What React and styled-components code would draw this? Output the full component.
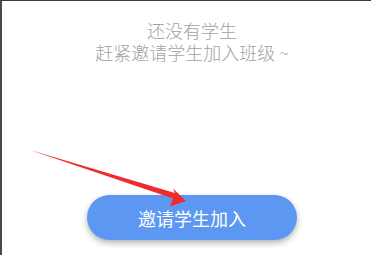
import React from "react";
import styled, { createGlobalStyle } from "styled-components";

const GlobalStyle = createGlobalStyle`
  html, body {
    margin: 0;
    padding: 0;
    background: #fff;
  }
  body {
    font-family: "Microsoft YaHei", "Noto Sans CJK SC", "Noto Sans", sans-serif;
  }
`;

const Frame = styled.div`
  position: relative;
  box-sizing: border-box;
  width: 371px;
  height: 255px;
  overflow: hidden;
  border-top: 1px solid #3a3a3a;
  border-left: 2px solid #4a4a4a;
  background: #fff;
  display: flex;
  flex-direction: column;
  align-items: center;
  padding: 18px 0 15px 11px;
`;

const Empty = styled.div`
  display: flex;
  flex-direction: column;
  align-items: center;
  color: #a2a2a2;
  font-size: 18px;
  line-height: 22px;
`;

const Line = styled.p`
  margin: 0;
  white-space: nowrap;
  font-weight: 300;
`;

const InviteButton = styled.button`
  margin-top: auto;
  width: 210px;
  height: 45px;
  border: none;
  border-radius: 23px;
  background: #5c97f2;
  color: #fff;
  font-family: inherit;
  font-size: 18px;
  box-shadow: 0 3px 6px rgba(0, 0, 0, 0.3);
  cursor: pointer;
`;

const Arrow = styled.svg`
  position: absolute;
  left: 0;
  top: 0;
  pointer-events: none;
`;

export default function App() {
  return (
    <>
      <GlobalStyle />
      <Frame>
        <Empty>
          <Line>还没有学生</Line>
          <Line>赶紧邀请学生加入班级 ~</Line>
        </Empty>
        <InviteButton>邀请学生加入</InviteButton>
        <Arrow width={371} height={255} viewBox="0 0 371 255">
          <polygon
            points="28,149 173,192 171,187.5 184,200 168,205.5 171,197.5"
            fill="#ee2c2c"
          />
        </Arrow>
      </Frame>
    </>
  );
}
